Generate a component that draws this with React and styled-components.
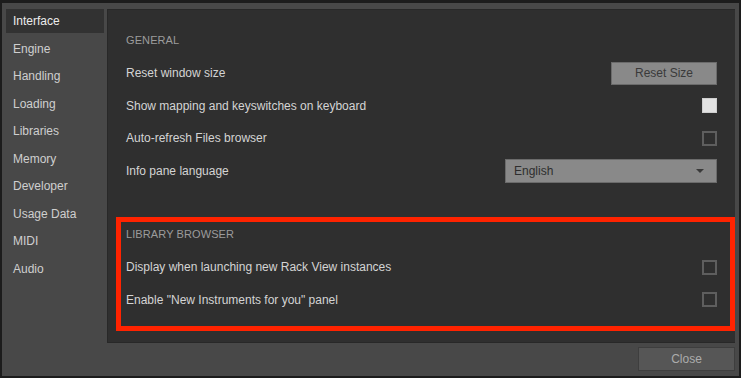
import React, { useState } from "react";
import styled, { createGlobalStyle } from "styled-components";

const GlobalStyle = createGlobalStyle`
  html, body {
    margin: 0;
    padding: 0;
    background: #1c1c1c;
  }
  body {
    font-family: "Liberation Sans", Arial, sans-serif;
  }
`;

const Window = styled.div`
  margin: 3px 2px 0 2px;
  height: 373px;
  background: #484848;
  display: flex;
  flex-direction: column;
  box-sizing: border-box;
  padding: 6px 4px 0 3px;
`;

const Body = styled.div`
  display: flex;
  height: 334px;
`;

const Sidebar = styled.nav`
  width: 102px;
  display: flex;
  flex-direction: column;
  gap: 3.5px;
`;

const NavItem = styled.div`
  height: 24px;
  margin: 0 3px 0 1px;
  padding-left: 7px;
  display: flex;
  align-items: center;
  font-size: 12px;
  color: ${(p) => (p.$active ? "#ececec" : "#cfcfcf")};
  background: ${(p) => (p.$active ? "#323232" : "transparent")};
`;

const Panel = styled.main`
  flex: 1;
  background: #2f2f2f;
  border: 1px solid #282828;
  border-right: none;
  padding: 18px 0 0 8px;
  box-sizing: border-box;
`;

const Section = styled.section`
  box-sizing: border-box;
  padding: ${(p) => (p.$highlight ? "0 13px 10px 5px" : "0 18px 0 10px")};
  border: ${(p) => (p.$highlight ? "5px solid #ff2300" : "none")};
  margin-top: ${(p) => (p.$highlight ? "30px" : "0")};
`;

const Heading = styled.div`
  height: 24px;
  margin-bottom: 5px;
  display: flex;
  align-items: center;
  font-size: 11px;
  color: #9c9c9c;
  letter-spacing: 0.1px;
`;

const Row = styled.div`
  height: 32.5px;
  display: flex;
  align-items: center;
  justify-content: space-between;
  font-size: 12px;
  color: #d4d4d4;
`;

const GrayButton = styled.button`
  width: 106px;
  height: 23px;
  background: #898989;
  border: 1px solid #6b6b6b;
  color: #3a3a3a;
  font-family: inherit;
  font-size: 12px;
  padding: 0;
`;

const Check = styled.div`
  width: 15px;
  height: 15px;
  box-sizing: border-box;
  background: ${(p) => (p.$checked ? "#e2e2e2" : "transparent")};
  border: ${(p) => (p.$checked ? "1px solid #cfcfcf" : "2px solid #5e5e5e")};
`;

const Select = styled.div`
  width: 212px;
  height: 24px;
  box-sizing: border-box;
  background: #898989;
  border: 1px solid #6b6b6b;
  display: flex;
  align-items: center;
  justify-content: space-between;
  padding: 0 12px 0 8px;
  font-size: 12px;
  color: #2e2e2e;
`;

const Arrow = styled.span`
  width: 0;
  height: 0;
  border-left: 4px solid transparent;
  border-right: 4px solid transparent;
  border-top: 4px solid #3a3a3a;
`;

const Footer = styled.footer`
  display: flex;
  justify-content: flex-end;
  padding-top: 4px;
`;

const CloseButton = styled.button`
  width: 97px;
  height: 24px;
  background: #565656;
  border: 1px solid #3e3e3e;
  color: #acacac;
  font-family: inherit;
  font-size: 12px;
  padding: 0;
`;

const navItems = [
  "Interface",
  "Engine",
  "Handling",
  "Loading",
  "Libraries",
  "Memory",
  "Developer",
  "Usage Data",
  "MIDI",
  "Audio",
];

const App = () => {
  const [active, setActive] = useState("Interface");

  return (
    <>
      <GlobalStyle />
      <Window>
        <Body>
          <Sidebar>
            {navItems.map((item) => (
              <NavItem
                key={item}
                $active={item === active}
                onClick={() => setActive(item)}
              >
                {item}
              </NavItem>
            ))}
          </Sidebar>
          <Panel>
            <Section>
              <Heading>GENERAL</Heading>
              <Row>
                Reset window size
                <GrayButton>Reset Size</GrayButton>
              </Row>
              <Row>
                Show mapping and keyswitches on keyboard
                <Check $checked />
              </Row>
              <Row>
                Auto-refresh Files browser
                <Check />
              </Row>
              <Row>
                Info pane language
                <Select>
                  English
                  <Arrow />
                </Select>
              </Row>
            </Section>
            <Section $highlight>
              <Heading>LIBRARY BROWSER</Heading>
              <Row>
                Display when launching new Rack View instances
                <Check />
              </Row>
              <Row>
                Enable "New Instruments for you" panel
                <Check />
              </Row>
            </Section>
          </Panel>
        </Body>
        <Footer>
          <CloseButton>Close</CloseButton>
        </Footer>
      </Window>
    </>
  );
};

export default App;
